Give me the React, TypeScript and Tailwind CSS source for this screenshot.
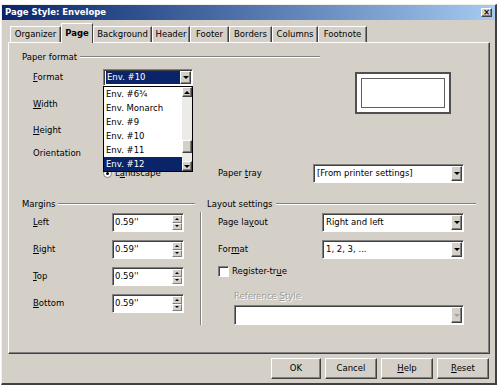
import React from 'react';

const raised =
  'border border-t-white border-l-white border-r-[#404040] border-b-[#404040] shadow-[inset_-1px_-1px_0_#808080] bg-[#d4d0c8]';
const spinBtn =
  'border border-t-white border-l-white border-r-[#808080] border-b-[#808080] bg-[#d4d0c8]';
const sunken =
  'border border-t-[#808080] border-l-[#808080] border-r-white border-b-white shadow-[inset_1px_1px_0_#404040]';

const Down = ({ muted = false }: { muted?: boolean }) => (
  <span
    className={`w-0 h-0 border-x-[3px] border-x-transparent border-t-[3px] ${
      muted ? 'border-t-[#a0a0a0]' : 'border-t-black'
    }`}
  />
);

const Up = () => (
  <span className="w-0 h-0 border-x-[3px] border-x-transparent border-b-[3px] border-b-black" />
);

const Combo = ({
  text,
  w,
  h = 19,
  selected = false,
  disabled = false,
}: {
  text: string;
  w: string;
  h?: number;
  selected?: boolean;
  disabled?: boolean;
}) => (
  <div
    className={`${sunken} ${w} ${h === 17 ? 'h-[17px]' : h === 20 ? 'h-[20px]' : 'h-[19px]'} bg-white flex items-stretch p-px`}
  >
    <div className="flex-1 flex items-center pl-px">
      <span
        className={`w-full h-full flex items-center pl-px ${
          selected ? 'bg-[#0a246a] text-white' : ''
        }`}
      >
        {text}
      </span>
    </div>
    <div className={`${raised} w-[11px] flex items-center justify-center`}>
      <Down muted={disabled} />
    </div>
  </div>
);

const Spin = ({ value }: { value: string }) => (
  <div className={`${sunken} w-[72px] h-[19px] bg-white flex items-stretch p-px`}>
    <div className="flex-1 flex items-center pl-px">{value}</div>
    <div className="w-[10px] flex flex-col">
      <div className={`${spinBtn} flex-1 flex items-center justify-center`}>
        <span className="w-0 h-0 border-x-[2px] border-x-transparent border-b-[2px] border-b-black" />
      </div>
      <div className={`${spinBtn} flex-1 flex items-center justify-center`}>
        <span className="w-0 h-0 border-x-[2px] border-x-transparent border-t-[2px] border-t-black" />
      </div>
    </div>
  </div>
);

const GroupHeader = ({ label, w }: { label: string; w: string }) => (
  <div className={`${w} h-[12px] flex items-center gap-[3px]`}>
    <span className="whitespace-nowrap">{label}</span>
    <div className="flex-1 h-[2px] border-t border-t-[#808080] border-b border-b-white" />
  </div>
);

const tabs = [
  { label: 'Organizer', w: 'w-[51px]' },
  { label: 'Page', w: 'w-[32px]', active: true },
  { label: 'Background', w: 'w-[59px]' },
  { label: 'Header', w: 'w-[38px]' },
  { label: 'Footer', w: 'w-[39px]' },
  { label: 'Borders', w: 'w-[43px]' },
  { label: 'Columns', w: 'w-[46px]' },
  { label: 'Footnote', w: 'w-[49px]' },
];

const envelopes = ['Env. #6¾', 'Env. Monarch', 'Env. #9', 'Env. #10', 'Env. #11', 'Env. #12'];

// open drop-down of the Format combo, lies over the rows below it
const FormatList = () => (
  <div className="absolute left-0 top-[17px] w-[90px] h-[86px] bg-white border border-black z-20 flex">
    <div className="flex-1 flex flex-col">
      {envelopes.map((env, i) => (
        <div
          key={env}
          className={`h-[14px] leading-[14px] pl-[2px] ${
            i === envelopes.length - 1 ? 'bg-[#0a246a] text-white' : ''
          }`}
        >
          {env}
        </div>
      ))}
    </div>
    <div className="w-[10px] flex flex-col bg-[#ecebe7]">
      <div className={`${raised} h-[10px] flex items-center justify-center`}>
        <Up />
      </div>
      <div className="h-[43px]" />
      <div className={`${raised} h-[13px]`} />
      <div className="flex-1" />
      <div className={`${raised} h-[10px] flex items-center justify-center`}>
        <Down />
      </div>
    </div>
  </div>
);

const Radio = ({ checked }: { checked: boolean }) => (
  <span className="w-[9px] h-[9px] rounded-full bg-white border border-[#808080] flex items-center justify-center">
    {checked && <span className="w-[3px] h-[3px] rounded-full bg-black" />}
  </span>
);

const PaperFormat = () => (
  <section>
    <GroupHeader label="Paper format" w="w-[298px]" />
    <div className="pl-[11px]">
      <div className="mt-[6px] w-[418px] flex justify-between">
        <div className="flex flex-col">
          <div className="h-[17px] flex items-center">
            <span className="w-[70px]">
              <u>F</u>ormat
            </span>
            <div className="relative">
              <Combo text="Env. #10" w="w-[90px]" h={17} selected />
              <FormatList />
            </div>
          </div>
          <div className="mt-[9px] h-[19px] flex items-center">
            <span className="w-[79px]">
              <u>W</u>idth
            </span>
            <Spin value="" />
          </div>
          <div className="mt-[7px] h-[19px] flex items-center">
            <span className="w-[79px]">
              <u>H</u>eight
            </span>
            <Spin value="" />
          </div>
          <div className="mt-[7px] h-[12px] flex items-center">
            <span className="w-[70px]">Orientation</span>
            <Radio checked={false} />
          </div>
        </div>
        <div className="mt-[3px] w-[96px] h-[42px] border-2 border-[#505050] bg-white p-[4px]">
          <div className="w-full h-full border border-[#606060] bg-white" />
        </div>
      </div>
      <div className="mt-[5px] h-[19px] flex items-center">
        <span className="w-[70px]" />
        <div className="w-[115px] flex items-center">
          <Radio checked />
          <span className="ml-[3px]">
            L<u>a</u>ndscape
          </span>
        </div>
        <span className="w-[95px]">
          Paper <u>t</u>ray
        </span>
        <Combo text="[From printer settings]" w="w-[151px]" />
      </div>
    </div>
  </section>
);

const Margins = () => (
  <div className="w-[178px]">
    <GroupHeader label="Margins" w="w-[173px]" />
    <div className="pl-[11px] mt-[3px] flex flex-col gap-[8px]">
      {[
        ['L', 'eft'],
        ['R', 'ight'],
        ['T', 'op'],
        ['B', 'ottom'],
      ].map(([k, rest]) => (
        <div key={k} className="h-[19px] flex items-center">
          <span className="w-[79px]">
            <u>{k}</u>
            {rest}
          </span>
          <Spin value="0.59''" />
        </div>
      ))}
    </div>
  </div>
);

const LayoutSettings = () => (
  <div className="pl-[5px]">
    <GroupHeader label="Layout settings" w="w-[269px]" />
    <div className="pl-[11px]">
      <div className="mt-[3px] h-[19px] flex items-center">
        <span className="w-[104px]">
          Page la<u>y</u>out
        </span>
        <Combo text="Right and left" w="w-[142px]" />
      </div>
      <div className="mt-[8px] h-[19px] flex items-center">
        <span className="w-[104px]">
          For<u>m</u>at
        </span>
        <Combo text="1, 2, 3, ..." w="w-[142px]" />
      </div>
      <div className="mt-[6px] h-[12px] flex items-center">
        <span className={`${sunken} w-[11px] h-[11px] bg-white`} />
        <span className="ml-[3px]">
          Register-tr<u>u</u>e
        </span>
      </div>
      <div className="mt-[13px] h-[12px] pl-[16px] flex items-center text-[#a09e99] [text-shadow:1px_1px_0_#fff]">
        <span>
          Reference <u>S</u>tyle
        </span>
      </div>
      <div className="mt-[3px] pl-[16px]">
        <Combo text="" w="w-[230px]" h={20} disabled />
      </div>
    </div>
  </div>
);

export default function App() {
  return (
    <div className="w-[500px] h-[388px] bg-white pt-[4px] pl-[1px] font-['DejaVu_Sans',sans-serif] text-[8.5px] text-black">
      <div className="w-[496px] h-[381px] bg-[#d4d0c8] border-l border-t border-l-[#f0efeb] border-t-[#f0efeb] border-r-2 border-b-2 border-r-[#404040] border-b-[#404040] flex flex-col">
        <div className="h-[15px] flex items-center justify-between bg-gradient-to-r from-[#0a246a] to-[#a6caf0] pl-[3px] pr-[3px]">
          <span className="text-white font-bold">Page Style: Envelope</span>
          <div className={`${raised} w-[11px] h-[9px] flex items-center justify-center text-[8px] leading-none font-bold`}>
            ×
          </div>
        </div>

        <div className="mt-[3px] ml-[8px] h-[19px] flex items-end">
          {tabs.map((t) =>
            t.active ? (
              <div
                key={t.label}
                className={`${t.w} h-[20px] -mb-px relative z-10 bg-[#d4d0c8] border-t border-l border-t-white border-l-white border-r border-r-[#404040] flex items-center justify-center font-bold`}
              >
                {t.label}
              </div>
            ) : (
              <div
                key={t.label}
                className={`${t.w} h-[16px] border-t border-l border-t-white border-l-white border-r border-r-[#404040] shadow-[inset_-1px_0_0_#808080] flex items-center justify-center`}
              >
                {t.label}
              </div>
            )
          )}
        </div>

        <div className="ml-[6px] w-[482px] h-[312px] border-l border-t border-l-white border-t-white border-r border-b border-r-[#404040] border-b-[#404040] shadow-[inset_-1px_-1px_0_#808080] pt-[8px] pl-[13px]">
          <PaperFormat />
          <div className="mt-[15px] flex">
            <Margins />
            <div className="mt-[14px] w-[2px] h-[113px] border-l border-l-[#808080] border-r border-r-white" />
            <LayoutSettings />
          </div>
        </div>

        <div className="mt-[4px] pr-[6px] flex justify-end gap-[4px]">
          {[
            ['OK', '', 'w-[50px]'],
            ['', 'Cancel', 'w-[52px]'],
            ['H', 'elp', 'w-[52px]'],
            ['R', 'eset', 'w-[52px]'],
          ].map(([k, rest, w]) => (
            <div key={k + rest} className={`${raised} ${w} h-[21px] flex items-center justify-center`}>
              {k === 'OK' ? (
                'OK'
              ) : (
                <span>
                  {k && <u>{k}</u>}
                  {rest}
                </span>
              )}
            </div>
          ))}
        </div>
      </div>
    </div>
  );
}
